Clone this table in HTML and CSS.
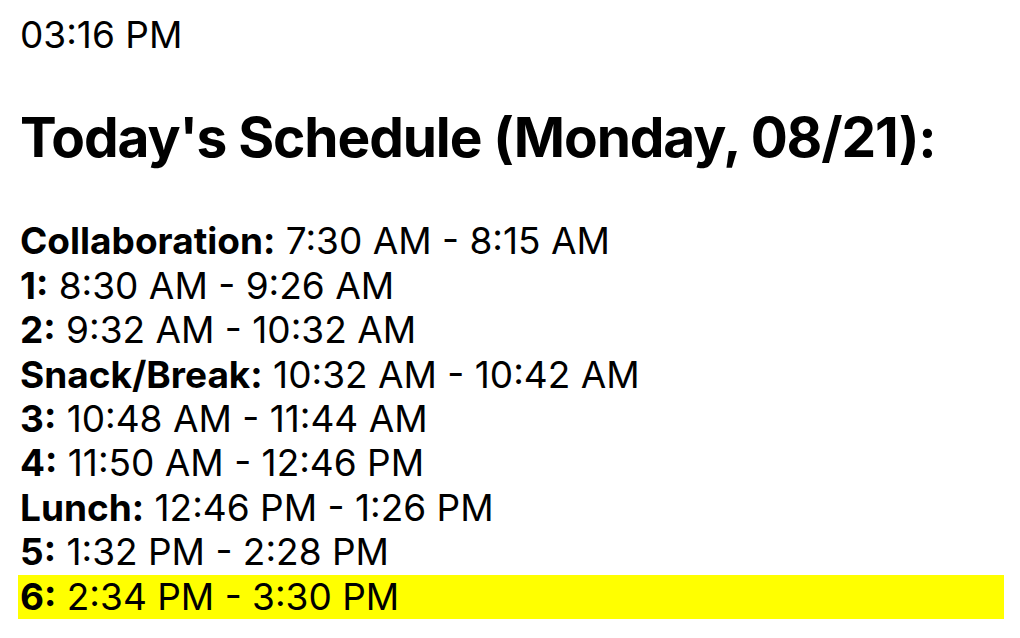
FILE: index.html
```html
<!DOCTYPE html>
<html>
<head>
<meta charset="utf-8">
<link rel="stylesheet" href="styles.css">
</head>
<body>
<div class="page">
  <div class="clock">03:16 PM</div>
  <h1 class="title">Today's Schedule (Monday, 08/21):</h1>
  <ul class="schedule">
    <li class="row"><b>Collaboration:</b> 7:30 AM - 8:15 AM</li>
    <li class="row"><b>1:</b> 8:30 AM - 9:26 AM</li>
    <li class="row"><b>2:</b> 9:32 AM - 10:32 AM</li>
    <li class="row"><b>Snack/Break:</b> 10:32 AM - 10:42 AM</li>
    <li class="row"><b>3:</b> 10:48 AM - 11:44 AM</li>
    <li class="row"><b>4:</b> 11:50 AM - 12:46 PM</li>
    <li class="row"><b>Lunch:</b> 12:46 PM - 1:26 PM</li>
    <li class="row"><b>5:</b> 1:32 PM - 2:28 PM</li>
    <li class="row current"><b>6:</b> 2:34 PM - 3:30 PM</li>
  </ul>
</div>
</body>
</html>
```

FILE: styles.css
```css
html, body {
  margin: 0;
  padding: 0;
  background: #ffffff;
}
body {
  font-family: Inter, "Noto Sans", "Liberation Sans", sans-serif;
  color: #000;
}
.page {
  padding: 13px 16px 0 18px;
}
.clock {
  font-size: 37px;
  line-height: 44.4px;
  padding-left: 2px;
}
.title {
  font-size: 55px;
  font-weight: 700;
  letter-spacing: -1.1px;
  line-height: 66px;
  margin: 47px 0 0 0;
  padding-left: 2px;
}
.schedule {
  list-style: none;
  margin: 49px 0 0 0;
  padding: 0;
}
.row {
  font-size: 37px;
  line-height: 44.4px;
  padding-left: 2px;
}
.row b {
  font-weight: 700;
}
.current {
  background: #ffff00;
}
```
